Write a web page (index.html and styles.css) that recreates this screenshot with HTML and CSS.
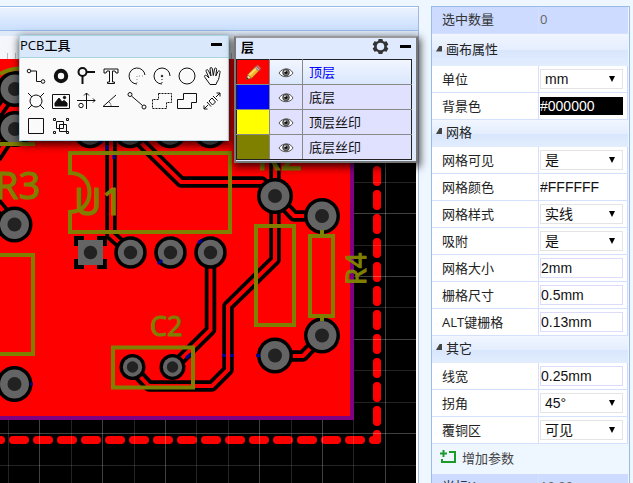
FILE: index.html
```
<!DOCTYPE html>
<html lang="zh-CN">
<head>
<meta charset="utf-8">
<title>PCB 编辑器</title>
<link rel="stylesheet" href="styles.css">
</head>
<body>
<div class="app">
  <main class="editor">
    <div class="toolbar"></div>
    <div class="ruler"></div>
    <svg class="canvas" aria-label="PCB">
      <defs>
        <g id="pad-l"><circle r="18" fill="#000"/><circle r="14.5" fill="#646464"/><circle r="7" fill="#222"/></g>
        <g id="pad-m"><circle r="16.3" fill="#000"/><circle r="12.7" fill="#646464"/><circle r="6.7" fill="#222"/></g>
        <g id="pad-s"><circle r="13" fill="#000"/><circle r="9.7" fill="#646464"/><circle r="5.7" fill="#222"/></g>
        <g id="traces" fill="none">
          <path d="M111 59V235L130 252"/>
          <path d="M125 127L181 182H262L275 195"/>
          <path d="M275 59V260L228 306V370L212 386H149L132 368"/>
          <path d="M210.5 252V330L173 367"/>
          <path d="M275 196L294 216H322"/>
          <path d="M275 356H303L322 336"/>
          <path d="M-6 200L14 224"/>
          <path d="M-4 116L15 89M-4 158L15 129"/>
        </g>
      </defs>
      <g transform="translate(0 -59)">
        <path d="M0 59H352V418H0Z" fill="#f00"/>
        <path d="M352 59V418H0" fill="none" stroke="#800080" stroke-width="4"/>
        <use href="#traces" stroke="#000" stroke-width="11.5" stroke-linejoin="round"/>
        <use href="#traces" stroke="#f00" stroke-width="4"/>
        <path d="M-11 440H377" class="outline"/>
        <path d="M377 74V440" class="outline"/>
        <path class="grid-strong" d="M354 213.5H416M354 276.5H416M354 339.5H416M0 433.5H416M39.5 420V483M102.5 420V483M165.5 420V483M259.5 420V483M322.5 420V483M385.5 59V483"/>
        <path class="grid-weak" d="M354 182.5H416M354 245.5H416M354 307.5H416M354 370.5H416M354 402.5H416M0 465.5H416M8.5 420V483M71.5 420V483M134.5 420V483M196.5 420V483M228.5 420V483M291.5 420V483M353.5 420V483"/>
        <use href="#pad-l" x="15" y="89"/><use href="#pad-l" x="15" y="129"/>
        <use href="#pad-m" x="90" y="132"/><use href="#pad-m" x="130" y="132"/><use href="#pad-m" x="170" y="132"/><use href="#pad-m" x="210" y="132"/>
        <path d="M74 236H84V241H97V236H107V246H103V259H107V269H97V265H84V269H74V259H78V246H74Z"/>
        <path d="M78 240H103V265H78Z" fill="#646464"/><circle cx="90.5" cy="252.5" r="6.7" fill="#222"/>
        <use href="#pad-m" x="130.5" y="252.5"/><use href="#pad-m" x="170.5" y="252.5"/><use href="#pad-m" x="210.5" y="252.5"/>
        <use href="#pad-l" x="14.5" y="224.5"/><use href="#pad-l" x="14.5" y="384"/>
        <use href="#pad-l" x="275" y="196"/><use href="#pad-l" x="322" y="216"/>
        <use href="#pad-l" x="275" y="355.5"/><use href="#pad-l" x="322" y="335.5"/>
        <use href="#pad-s" x="132.5" y="367"/><use href="#pad-s" x="172.5" y="367"/>
        <path stroke="#000090" stroke-width="3" d="M222 355.5H226M230 355.5H234M256 355.5H260M158 264L162 260M198 243L202 240M186 358L191 354M30 384H33M107 145V150M114 154V159M100 143L103 140"/>
        <g fill="none" stroke="#808000" stroke-width="4">
          <path d="M70 153H230V232H70V212C96 212 96 173 70 173Z"/>
          <path d="M256 226H294V325H256ZM310 236H333V316H310ZM322 230V236M322 316V321"/>
          <path d="M0 255H33V354H0M113 347.5H193V387.5H113Z"/>
          <path d="M0 74C10 68 20 68 40 68M0 144H35"/>
        </g>
        <g class="silk">
          <text x="-5" y="199" font-size="38">R3</text>
          <text x="74" y="215" font-size="38">U1</text>
          <text x="257" y="170" font-size="38">R2</text>
          <text x="150" y="336" font-size="27">C2</text>
          <text transform="translate(366 285) rotate(-90)" font-size="27">R4</text>
        </g>
      </g>
    </svg>

    <section class="window tools">
      <header class="tools-head"><span>PCB工具</span><button class="minimize" aria-label="最小化"></button></header>
      <div class="tool-grid">
        <button aria-label="导线"><svg viewBox="0 0 20 20"><circle cx="3" cy="5" r="1.8"/><circle cx="17" cy="15.5" r="1.8"/><path d="M5 5H10.500V15.500H15"/></svg></button>
        <button aria-label="焊盘"><svg viewBox="0 0 20 20"><circle cx="10" cy="10" r="5.2" stroke-width="4"/></svg></button>
        <button aria-label="过孔"><svg viewBox="0 0 20 20"><circle cx="6.5" cy="6" r="4" stroke-width="2"/><path d="M10 6H19M6.500 10V18" stroke-width="2"/></svg></button>
        <button aria-label="文本"><svg viewBox="0 0 20 20"><path d="M3 3H17V7H15L14 5H11.500V16H13.500V17.500H6.500V16H8.500V5H6L5 7H3Z"/></svg></button>
        <button aria-label="圆弧"><svg viewBox="0 0 20 20"><path d="M18 9A8 8 0 1 0 10 18"/><path d="M10 17V10H17" stroke-dasharray="1 2" stroke="#888"/></svg></button>
        <button aria-label="中心圆弧"><svg viewBox="0 0 20 20"><path d="M18 10A8 8 0 1 0 10 18"/><path d="M10 17V10" stroke-dasharray="1 2"/><circle cx="10" cy="10" r=".8"/></svg></button>
        <button aria-label="圆"><svg viewBox="0 0 20 20"><circle cx="10" cy="10" r="8"/></svg></button>
        <button aria-label="拖动"><svg viewBox="0 0 20 20"><path d="M7 17L3 11.500C1.500 9.500 3.500 8.500 5 10L7 12L4.200 5.500C3.500 3.500 5.700 3 6.300 4.500L9 10L8 3C8 1 10 1 10.300 2.800L11.300 9.500L12.500 3C13 1.300 14.800 1.800 14.600 3.600L13.800 10L16 5.500C17 4 18.500 5 18 6.500C17 10 17.500 13 15 16L14 18.500H8Z"/></svg></button>
        <button aria-label="安装孔"><svg viewBox="0 0 20 20"><circle cx="10" cy="10" r="6"/><path d="M2 2L6 6M18 2L14 6M2 18L6 14M18 18L14 14"/></svg></button>
        <button aria-label="图片"><svg viewBox="0 0 20 20"><path d="M1.500 3.500H18.500V17.500H1.500Z"/><path d="M4 15V12L8 7L11 11L13 9.500L16 12V15Z" fill="#111"/><circle cx="13.5" cy="6.5" r="1.2" fill="#111"/></svg></button>
        <button aria-label="原点"><svg viewBox="0 0 20 20"><path d="M10.500 18V2M8 4.500L10.500 2L13 4.500M1 9.500H19M17 7.500L19 9.500L17 11.500"/><circle cx="5" cy="14.5" r="2.2"/></svg></button>
        <button aria-label="量角器"><svg viewBox="0 0 20 20"><path d="M15 4L2 15.500H18"/><path d="M8 11C9.500 12 10 13.500 10 15" stroke-dasharray="1 1"/></svg></button>
        <button aria-label="直线"><svg viewBox="0 0 20 20"><circle cx="3" cy="3.5" r="2"/><circle cx="17" cy="16" r="2"/><path d="M4.500 5L15.500 14.500"/></svg></button>
        <button aria-label="铺铜"><svg viewBox="0 0 20 20"><path d="M6.500 2.500H19.500V11.500H14.500V17.500H.5V8.500H6.500Z" stroke-dasharray="2 1"/></svg></button>
        <button aria-label="实心填充"><svg viewBox="0 0 20 20"><path d="M6.500 2.500H19.500V11.500H14.500V17.500H.5V8.500H6.500Z"/></svg></button>
        <button aria-label="尺寸"><svg viewBox="0 0 20 20"><path d="M2 18L6 14M2 14.500V18H5.500M14 6L18 2M14.500 2H18V5.500M5 11L9 15.500M11 5L15.500 9.500M7 10L10 7L13.500 11L10.500 14Z"/></svg></button>
        <button aria-label="矩形"><svg viewBox="0 0 20 20"><path d="M2.500 2.500H17.500V17.500H2.500Z"/></svg></button>
        <button aria-label="组合"><svg viewBox="0 0 20 20"><path d="M5.500 5.500H12.500V12.500H5.500ZM8.500 8.500H15.500V15.500H8.500Z"/><path d="M2.500 2.500H4.500V4.500H2.500ZM15.500 2.500H17.500V4.500H15.500ZM2.500 15.500H4.500V17.500H2.500ZM15.500 15.500H17.500V17.500H15.500Z"/></svg></button>
      </div>
    </section>

    <section class="window layers">
      <header class="layers-head"><span>层</span>
        <button class="gear" aria-label="层设置"><svg viewBox="0 0 18 18"><path d="M7 1H11L11.600 3.200L13.200 4.100L15.400 3.500L17.300 7L15.700 8.500V9.500L17.300 11L15.400 14.500L13.200 13.900L11.600 14.800L11 17H7L6.400 14.800L4.800 13.900L2.600 14.500L.7 11L2.300 9.500V8.500L.7 7L2.600 3.500L4.800 4.100L6.400 3.200ZM9 5A4 4 0 1 0 9 13A4 4 0 1 0 9 5Z" fill="#333" fill-rule="evenodd"/></svg></button>
        <button class="minimize" aria-label="最小化"></button>
      </header>
      <svg width="0" height="0" class="defs"><defs>
        <g id="eye"><path d="M1 6C4 1 12 0 15 6C12 11 4 11 1 6Z" fill="#fff" stroke="#555"/><circle cx="8" cy="5.5" r="3.3" fill="#777" stroke="#444"/><circle cx="8" cy="5.5" r="1.5" fill="#111"/><circle cx="7" cy="4.2" r=".8" fill="#fff"/></g>
      </defs></svg>
      <table class="layer-table">
        <tr class="active"><td class="swatch red"><svg viewBox="0 0 18 18"><path d="M1.500 16.500L3 11L7 15Z" fill="#f4d9b0" stroke="#7a4a20" stroke-width=".6"/><path d="M1.500 16.500L2.200 14.200L4 15.900Z" fill="#222"/><path d="M3 11L10.500 3.500L14.500 7.500L7 15Z" fill="#f5b62c" stroke="#9a6414" stroke-width=".6"/><path d="M4.500 12L12 4.800" stroke="#ffe477" stroke-width="1.5"/><path d="M10.500 3.500L12 2L16 6L14.500 7.500Z" fill="#b8b8b8" stroke="#666" stroke-width=".6"/><path d="M12 2L13.500 .8L17 4.500L16 6Z" fill="#e66e6e" stroke="#a33" stroke-width=".6"/></svg></td><td class="eye"><svg viewBox="0 0 16 11"><use href="#eye"/></svg></td><td>顶层</td></tr>
        <tr><td class="swatch blue"></td><td class="eye"><svg viewBox="0 0 16 11"><use href="#eye"/></svg></td><td>底层</td></tr>
        <tr><td class="swatch yellow"></td><td class="eye"><svg viewBox="0 0 16 11"><use href="#eye"/></svg></td><td>顶层丝印</td></tr>
        <tr><td class="swatch olive"></td><td class="eye"><svg viewBox="0 0 16 11"><use href="#eye"/></svg></td><td>底层丝印</td></tr>
      </table>
    </section>
  </main>

  <aside class="props">
    <div class="row info"><label for="count">选中数量</label><div><output id="count">0</output></div></div>
    <h2 class="group tall">画布属性</h2>
    <div class="row"><label for="unit">单位</label><div><select id="unit"><option>mm</option></select></div></div>
    <div class="row"><label for="bg">背景色</label><div><input id="bg" class="color dark" value="#000000"></div></div>
    <h2 class="group">网格</h2>
    <div class="row"><label for="vis">网格可见</label><div><select id="vis"><option>是</option></select></div></div>
    <div class="row"><label for="gc">网格颜色</label><div><input id="gc" class="color" value="#FFFFFF"></div></div>
    <div class="row"><label for="gs">网格样式</label><div><select id="gs"><option>实线</option></select></div></div>
    <div class="row"><label for="snap">吸附</label><div><select id="snap"><option>是</option></select></div></div>
    <div class="row"><label for="size">网格大小</label><div><input id="size" value="2mm"></div></div>
    <div class="row"><label for="step">栅格尺寸</label><div><input id="step" value="0.5mm"></div></div>
    <div class="row"><label for="alt">ALT键栅格</label><div><input id="alt" value="0.13mm"></div></div>
    <h2 class="group">其它</h2>
    <div class="row"><label for="lw">线宽</label><div><input id="lw" value="0.25mm"></div></div>
    <div class="row"><label for="corner">拐角</label><div><select id="corner"><option>45°</option></select></div></div>
    <div class="row"><label for="copper">覆铜区</label><div><select id="copper"><option>可见</option></select></div></div>
    <button class="add"><svg viewBox="0 0 16 14"><path d="M3.500 0V7M0 3.500H7M9 2H15V12H2V9" fill="none" stroke="#1c9a2c" stroke-width="2"/></svg>增加参数</button>
    <div class="row info"><label for="cx">光标X</label><div><output id="cx">10.00</output></div></div>
  </aside>
</div>
</body>
</html>
```
FILE: styles.css
```
* { box-sizing: border-box; }

body {
  margin: 0;
  background: #eef6ff;
  color: #222;
  font-family: "Open Sans", "Noto Sans CJK SC", sans-serif;
  font-size: 13px;
}

button {
  border: 0;
  padding: 0;
  background: none;
  font: inherit;
}

.app {
  display: grid;
  grid-template-columns: 1fr 199px;
  gap: 12px;
  height: 100vh;
  padding: 6px 3px 0 0;
  overflow: hidden;
}

.editor {
  position: relative;
  display: flex;
  flex-direction: column;
  min-width: 0;
  border-top: 1px solid #99bbe8;
  border-right: 1px solid #a4b8dc;
}

.toolbar {
  height: 24px;
  border-top: 1px solid #fff;
  border-bottom: 1px solid #99bbe8;
  background: linear-gradient(#eaf2fe, #cadffd);
}

.ruler {
  height: 28px;
  border-top: 5px solid #dfeaf8;
  background: repeating-linear-gradient(90deg, transparent 0 7px, #bbb 7px 8px) 0 100% / 100% 6px no-repeat #f4f6fb;
}

.canvas {
  display: block;
  flex: 1;
  width: 100%;
  min-height: 0;
  border-right: 2px solid #fff;
  background: #000;
}

.outline {
  fill: none;
  stroke: #f00;
  stroke-width: 8;
  stroke-linecap: round;
  stroke-dasharray: 12 12;
}

.grid-strong { stroke: #fff; stroke-opacity: .25; }
.grid-weak { stroke: #fff; stroke-opacity: .14; }

.silk {
  fill: #808000;
  stroke: #808000;
  stroke-linejoin: round;
  font-family: "Noto Sans", sans-serif;
}

.window {
  position: absolute;
  box-shadow: 1px 3px 8px 1px rgba(0, 0, 0, .75);
}

.tools {
  top: 28px;
  left: 19px;
  width: 210px;
  border: 1px solid #a8d4e4;
  background: #fafafa;
}

.tools-head {
  display: flex;
  align-items: center;
  justify-content: space-between;
  height: 22px;
  padding: 0 6px 5px 0;
  border-bottom: 1px solid #a8d4e4;
  background: #d9e8fb;
  color: #000;
  font-weight: 500;
}

.minimize {
  width: 11px;
  height: 3px;
  background: #000;
}

.tool-grid {
  display: grid;
  grid-template-columns: repeat(8, 1fr);
  grid-auto-rows: 25px;
  padding: 5px 3px 2px;
}

.tool-grid button {
  display: grid;
  place-items: center;
}

.tool-grid svg {
  width: 20px;
  height: 20px;
  fill: none;
  stroke: #111;
}

.layers {
  top: 29px;
  left: 234px;
  width: 184px;
  padding: 0 4px 1px 0;
  border: 2px solid #777;
  border-top-color: #999;
  background: #e0eaff;
}

.layers-head {
  display: flex;
  align-items: center;
  height: 21px;
  padding: 0 1px 4px 5px;
  color: #000;
  font-weight: 700;
}

.layers-head span { flex: 1; }

.gear {
  width: 17px;
  height: 17px;
  margin-right: 11px;
}

.gear svg { display: block; }

.defs { position: absolute; }

.layer-table {
  width: 100%;
  border: 1px solid #222;
  border-collapse: collapse;
  table-layout: fixed;
  background: #e0e0ff;
  color: #111;
}

.layer-table td {
  height: 25px;
  padding: 0 0 1px 6px;
  border: 1px solid #888;
  line-height: 20px;
}

.layer-table tr:first-child td { border-top-color: #222; }
.layer-table tr:last-child td { border-bottom-color: #222; }
.layer-table td:first-child { border-left-color: #222; }
.layer-table td:last-child { border-right-color: #222; }

.layer-table .active {
  background: linear-gradient(#f2f6ff, #d8e6fc);
  color: #00f;
}

.layer-table .swatch,
.layer-table .eye {
  width: 33px;
  padding: 0;
  text-align: center;
}

.swatch svg {
  display: block;
  width: 17px;
  margin: auto;
}

.eye svg {
  display: block;
  width: 16px;
  margin: 0 auto;
}

.red { background: #f00; }
.blue { background: #00f; }
.yellow { background: #ff0; }
.olive { background: #808000; }

.props {
  border: 1px solid #99bbe8;
  border-bottom: 0;
  overflow: hidden;
  background: #eef6ff;
}

.row {
  display: grid;
  grid-template-columns: 107px 1fr;
  height: 27px;
  margin-right: 1px;
  border-right: 1px solid #d0d8fc;
  border-bottom: 1px solid #d5e0fb;
  background: #fff;
}

.row label {
  padding-left: 10px;
  border-right: 1px solid #d5e0fb;
  line-height: 26px;
}

.row > div {
  padding: 3px 4px 3px 1px;
}

.info {
  background: #ccdbff;
  color: #333;
}

.info label { line-height: 24px; }

.info output {
  color: #666;
  line-height: 18px;
}

.group {
  display: flex;
  align-items: center;
  height: 27px;
  margin: 0 1px 0 0;
  padding: 0 0 5px 4px;
  background: linear-gradient(#f1f6ff, #e4eefe 50%, #d8e6fc 51%, #e2edfe);
  font-size: 13px;
  font-weight: 400;
}

.tall { height: 32px; padding-bottom: 3px; }

.group::before {
  content: "";
  width: 6px;
  height: 6px;
  margin-right: 4px;
  background: #444;
  clip-path: polygon(60% 0, 100% 0, 100% 100%, 0 100%);
}

input,
select {
  display: block;
  width: 100%;
  height: 20px;
  margin: 0;
  padding: 0;
  border: 1px solid #dcdcfa;
  border-radius: 0;
  background: #fff;
  color: #111;
  font-family: "Liberation Sans", "Noto Sans CJK SC", sans-serif;
  font-size: 14px;
}

select {
  appearance: none;
  padding: 0 4px;
  border-color: #e4e4e4;
}

.row > div:has(select) {
  display: grid;
  align-items: center;
}

.row > div:has(select) > select { grid-area: 1 / 1; }

.row > div:has(select)::after {
  content: "";
  grid-area: 1 / 1;
  justify-self: end;
  width: 6px;
  height: 6px;
  margin-right: 8px;
  background: #000;
  clip-path: polygon(0 0, 100% 0, 50% 100%);
  pointer-events: none;
}

.color {
  height: 18px;
  margin-top: 1px;
  border: 0;
}

.dark { background: #000; color: #fff; }

.add {
  display: flex;
  align-items: center;
  gap: 6px;
  width: 100%;
  height: 30px;
  padding: 0 0 4px 8px;
  color: #444;
}

.add svg { width: 16px; height: 14px; }
```
